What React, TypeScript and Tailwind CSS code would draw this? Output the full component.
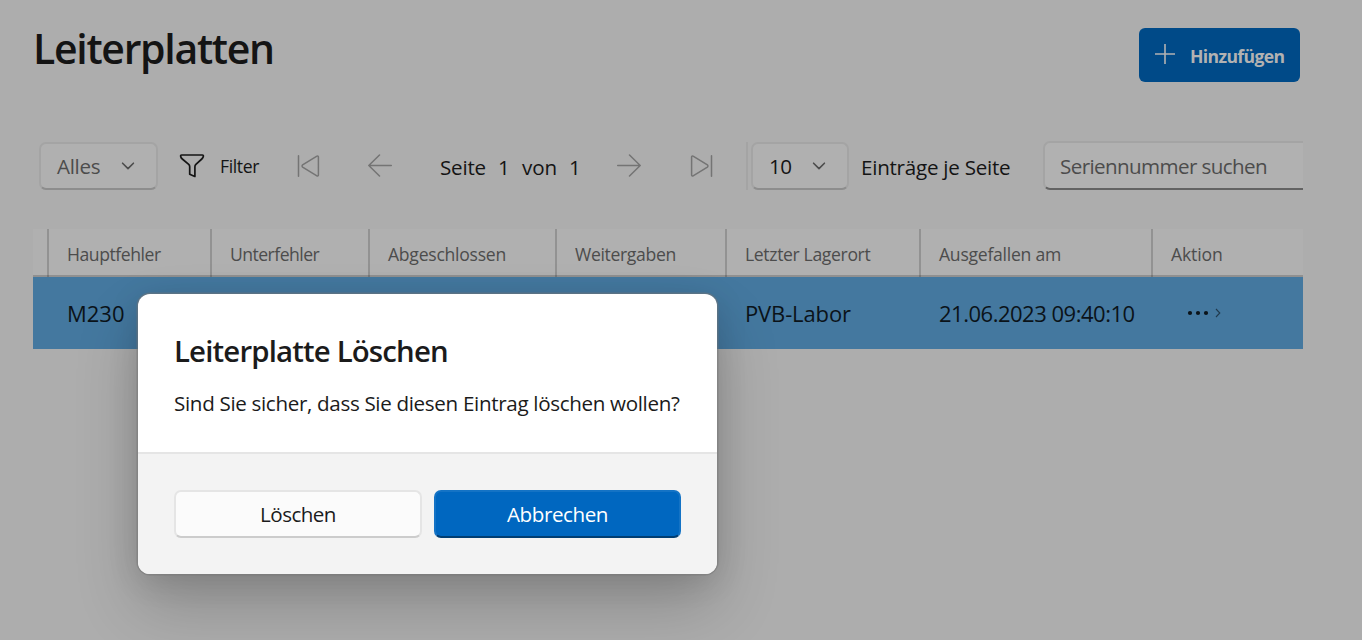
import type { ReactNode } from "react";

function Chevron({ className = "" }: { className?: string }) {
  return (
    <svg width="14" height="8" viewBox="0 0 14 8" fill="none" strokeWidth="1.6" strokeLinecap="round" strokeLinejoin="round" className={className}>
      <path d="M1.6 1.2 7 6.6l5.4-5.4" stroke="currentColor" />
    </svg>
  );
}

function Arrow({ right = false }: { right?: boolean }) {
  return (
    <svg width="26" height="24" viewBox="0 0 26 24" fill="none" stroke="#747474" strokeWidth="1.5" strokeLinecap="round" strokeLinejoin="round" className={right ? "-scale-x-100" : ""}>
      <path d="M24.300 11.500H1.800M12.500 1 1.800 11.500 12.500 22" />
    </svg>
  );
}

function Edge({ last = false }: { last?: boolean }) {
  return (
    <svg width="24" height="24" viewBox="0 0 24 24" fill="none" stroke="#747474" strokeWidth="1.5" strokeLinecap="round" strokeLinejoin="round" className={last ? "-scale-x-100" : ""}>
      <path d="M1.500 1.800v20.400" />
      <path d="M19.900 2.200c.7-.5 1.500-.1 1.500.7v18.200c0 .8-.8 1.200-1.500.7L5.600 13.100c-.7-.5-.7-1.700 0-2.200z" />
    </svg>
  );
}

function Cell({ children, className = "" }: { children?: ReactNode; className?: string }) {
  return <div className={`flex items-center whitespace-nowrap ${className}`}>{children}</div>;
}

const divider = "h-12 border-r-2 border-black/[0.17]";
const head = `${divider} pl-[18px] pt-[2px]`;
const body = "pl-[18px]";

export default function App() {
  return (
    <div className="relative h-[640px] w-[1362px] overflow-hidden bg-[#adadad] font-['Open_Sans',sans-serif] text-[20.6px] text-[#141414]">
      <header className="flex h-[142px] items-start justify-between pl-[33px] pr-[62px]">
        <h1 className="mt-[20px] text-[41px] font-semibold leading-[56px] tracking-[-1.3px]">Leiterplatten</h1>
        <button className="mt-[28px] flex h-[54px] w-[161px] items-center rounded-[6px] bg-[#004a88] pl-[15px] text-[17.6px] font-bold tracking-[-0.64px] text-[#b2b2b2]">
          <svg width="22" height="22" viewBox="0 0 22 22" stroke="#b2b2b2" strokeWidth="1.6" className="mr-[14px] -mt-[2px]">
            <path d="M11 1v20M1 11h20" />
          </svg>
          <span className="pt-[2px]">Hinzufügen</span>
        </button>
      </header>

      <div className="ml-[39px] grid h-12 w-[1264px] grid-cols-[141px_117px_70px_73px_58px_24px_47px_47px_74px_56px_5px_110px_182px_260px] items-center whitespace-nowrap">
        <div className="flex h-12 w-[119px] items-center rounded-[7px] border-2 border-[#a4a4a4] border-b-[#8d8d8d] bg-[#b0b0b0] pl-4 tracking-[-0.3px] text-[#4c4c4c]">
          <span className="w-[64px]">Alles</span>
          <Chevron />
        </div>
        <div className="flex items-center text-[17.6px] tracking-[-0.38px]">
          <svg width="26" height="26" viewBox="0 0 26 26" fill="none" stroke="#141414" strokeWidth="1.7" strokeLinejoin="round" className="-ml-px mr-[15px] mt-px">
            <path d="M2.700 2h20.600c1 0 1.200.7 1 1.500-.2 1-.7 1.800-1.500 2.500l-5.900 5.400c-.7.700-1 1.400-1 2.300v9.800L10.700 21.200v-7.500c0-.9-.3-1.600-1-2.300L3.300 6C2.400 5.300 1.900 4.500 1.700 3.500 1.500 2.700 1.700 2 2.700 2z" />
          </svg>
          <span className="pt-px">Filter</span>
        </div>
        <Edge />
        <Arrow />
        <span className="relative top-px tracking-[-0.22px]">Seite</span>
        <span className="relative top-px">1</span>
        <span className="relative top-px tracking-[-0.09px]">von</span>
        <span className="relative top-px">1</span>
        <Arrow right />
        <span className="-ml-px"><Edge last /></span>
        <div className="h-12 w-[2px] bg-[#a4a4a4]" />
        <div className="flex h-12 w-[98px] items-center rounded-[7px] border-2 border-[#a4a4a4] border-b-[#8d8d8d] bg-[#b0b0b0] pl-4 tracking-[-0.6px]">
          <span className="w-[43px]">10</span>
          <Chevron className="text-[#4c4c4c]" />
        </div>
        <span className="relative top-px tracking-[-0.25px]">Einträge je Seite</span>
        <div className="-mt-px flex h-[49px] items-center rounded-l-[7px] border-y-2 border-l-2 border-[#a4a4a4] border-b-[#636363] bg-[#b1b1b1] pl-[15px] pt-px tracking-[-0.6px] text-[#4c4c4c]">
          Seriennummer suchen
        </div>
      </div>

      <main className="ml-[33px] mt-[39px] w-[1270px]">
        <div className="grid h-12 grid-cols-[16px_163px_158px_187px_170px_194px_232px_150px] bg-[#b0b0b0] text-[17.6px] text-[#4c4c4c] shadow-[inset_0_-2px_0_#909090]">
          <Cell className={divider} />
          <Cell className={head}><span className="tracking-[-0.45px]">Hauptfehler</span></Cell>
          <Cell className={head}><span className="tracking-[-0.54px]">Unterfehler</span></Cell>
          <Cell className={head}><span className="tracking-[-0.26px]">Abgeschlossen</span></Cell>
          <Cell className={head}><span className="tracking-[-0.34px]">Weitergaben</span></Cell>
          <Cell className={head}><span className="tracking-[-0.36px]">Letzter Lagerort</span></Cell>
          <Cell className={head}><span className="tracking-[-0.26px]">Ausgefallen am</span></Cell>
          <Cell className="pl-[18px] pt-[2px]"><span className="tracking-[-0.13px]">Aktion</span></Cell>
        </div>
        <div className="grid h-[72px] grid-cols-[16px_163px_158px_187px_170px_194px_232px_150px] bg-[#44789f] text-[22px] text-[#0b1319]">
          <Cell />
          <Cell className={body}>M230</Cell>
          <Cell />
          <Cell />
          <Cell />
          <Cell className={body}><span className="tracking-[-0.13px]">PVB-Labor</span></Cell>
          <Cell className={body}><span className="tracking-[-0.49px]">21.06.2023 09:40:10</span></Cell>
          <Cell className={body}>
            <svg width="52" height="14" viewBox="0 0 52 14">
              <g fill="#0b1319">
                <circle cx="19" cy="7" r="2.100" />
                <circle cx="27" cy="7" r="2.100" />
                <circle cx="35" cy="7" r="2.100" />
              </g>
              <path d="M45 3l3.800 4L45 11" fill="none" stroke="#213a4d" strokeWidth="1.1" />
            </svg>
          </Cell>
        </div>
      </main>

      <div
        role="dialog"
        className="absolute left-[138px] top-[294px] flex h-[280px] w-[579px] flex-col overflow-hidden rounded-[12px] bg-white text-[#1b1b1b] shadow-[0_0_0_1.5px_rgba(117,117,117,0.5),0_32px_64px_rgba(0,0,0,0.2),0_6px_32px_rgba(0,0,0,0.12)]"
      >
        <div className="h-[160px] border-b-2 border-[#e5e5e5] pl-9 pt-[37px]">
          <h2 className="whitespace-nowrap text-[29.4px] font-semibold leading-10 tracking-[-0.85px]">Leiterplatte Löschen</h2>
          <p className="mt-[17px] whitespace-nowrap leading-[30px] tracking-[-0.33px]">Sind Sie sicher, dass Sie diesen Eintrag löschen wollen?</p>
        </div>
        <div className="flex flex-1 gap-3 bg-[#f3f3f3] px-9 pt-9">
          <button className="h-12 w-[248px] rounded-[7px] border-2 border-[#e5e5e5] border-b-[#cccccc] bg-[#fbfbfb] tracking-[-0.55px]">Löschen</button>
          <button className="h-12 w-[247px] rounded-[7px] border-2 border-[#1473c5] border-b-[#003e73] bg-[#0067c0] tracking-[-0.41px] text-white">Abbrechen</button>
        </div>
      </div>
    </div>
  );
}
